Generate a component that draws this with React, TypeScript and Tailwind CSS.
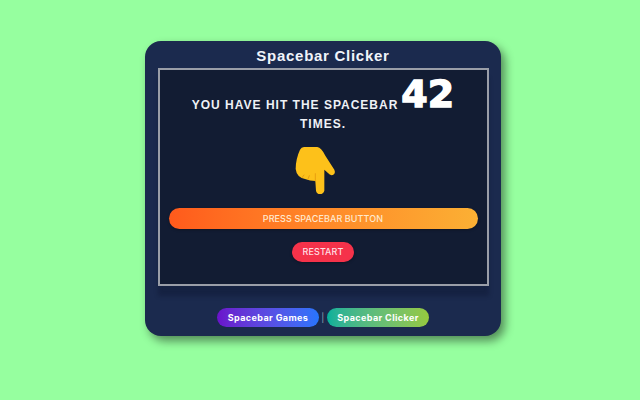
export default function App() {
  return (
    <div className="w-[640px] h-[400px] bg-[#96ff9f] flex items-start justify-center pt-[41px] pl-[6px] font-['Liberation_Sans',Arial,sans-serif]">
      <div className="w-[356px] h-[295px] bg-[#1b2a4e] rounded-[16px] shadow-[4px_5px_10px_rgba(0,0,0,0.45)] flex flex-col items-center">
        <h1 className="h-[27px] pt-[5px] text-[15px] leading-[20px] font-bold tracking-[0.72px] text-[#f0f4fa]">
          Spacebar Clicker
        </h1>
        <div className="w-[331px] h-[218px] bg-[#121c33] border-2 border-[#9a9ea8] shadow-[0_10px_4px_rgba(10,18,40,0.3)] flex flex-col items-center">
          <div className="w-[290px] h-[60px] mt-[7px] text-center text-[#eef1f6] text-[12px] font-bold tracking-[1px] leading-[18px]">
            <div className="flex items-end justify-center h-[35px]">
              <span className="leading-[18px] mb-[-2px]">YOU HAVE HIT THE SPACEBAR</span>
              <span className="ml-[3px] font-['DejaVu_Sans',sans-serif] text-[38px] leading-[35px] font-bold text-white tracking-normal [-webkit-text-stroke:1.4px_white]">42</span>
            </div>
            <div className="mt-[3px]">TIMES.</div>
          </div>
          <svg width="70" height="60" viewBox="0 0 210 180" className="mt-[2px] ml-[-17px]">
            <path
              d="M72 24 L112 24 Q124 26 136 50 L163 92 Q168 103 158 108 Q150 110 144 102 L133 92 L133 155 Q130 165 120 165 Q110 165 108 155 L106 126 Q90 126 75 120 Q50 115 47 90 Q47 60 60 32 Q64 24 72 24 Z"
              fill="#fdc11a"
            />
            <path d="M66 116 L72 108 M84 120 L88 110 M106 126 L106 104" stroke="#e89f10" strokeWidth="3" fill="none" strokeLinecap="round" />
          </svg>
          <button className="mt-[9px] w-[309px] h-[21px] rounded-full bg-gradient-to-r from-[#ff5a1c] to-[#fbb034] text-[#ffe9cf] text-[9px] font-medium tracking-[0.1px] font-['Inter',sans-serif] shadow-[0_1px_3px_rgba(0,0,0,0.3)]">
            PRESS SPACEBAR BUTTON
          </button>
          <button className="mt-[13px] w-[62px] h-[20px] rounded-full bg-[#f5324a] text-[#ffdfe2] text-[9px] font-medium tracking-[0.1px] font-['Inter',sans-serif] shadow-[0_1px_3px_rgba(0,0,0,0.3)]">
            RESTART
          </button>
        </div>
        <div className="mt-[22px] flex items-center text-[9px] font-bold font-['Inter',sans-serif] tracking-[0.4px] text-white">
          <a className="w-[102px] h-[19px] rounded-full bg-gradient-to-r from-[#6a11cb] to-[#2575fc] flex items-center justify-center">
            Spacebar Games
          </a>
          <span className="w-[8px] text-center font-normal text-[#9aa3b5]">|</span>
          <a className="w-[102px] h-[19px] rounded-full bg-gradient-to-r from-[#00b09b] to-[#96c93d] flex items-center justify-center">
            Spacebar Clicker
          </a>
        </div>
      </div>
    </div>
  );
}
